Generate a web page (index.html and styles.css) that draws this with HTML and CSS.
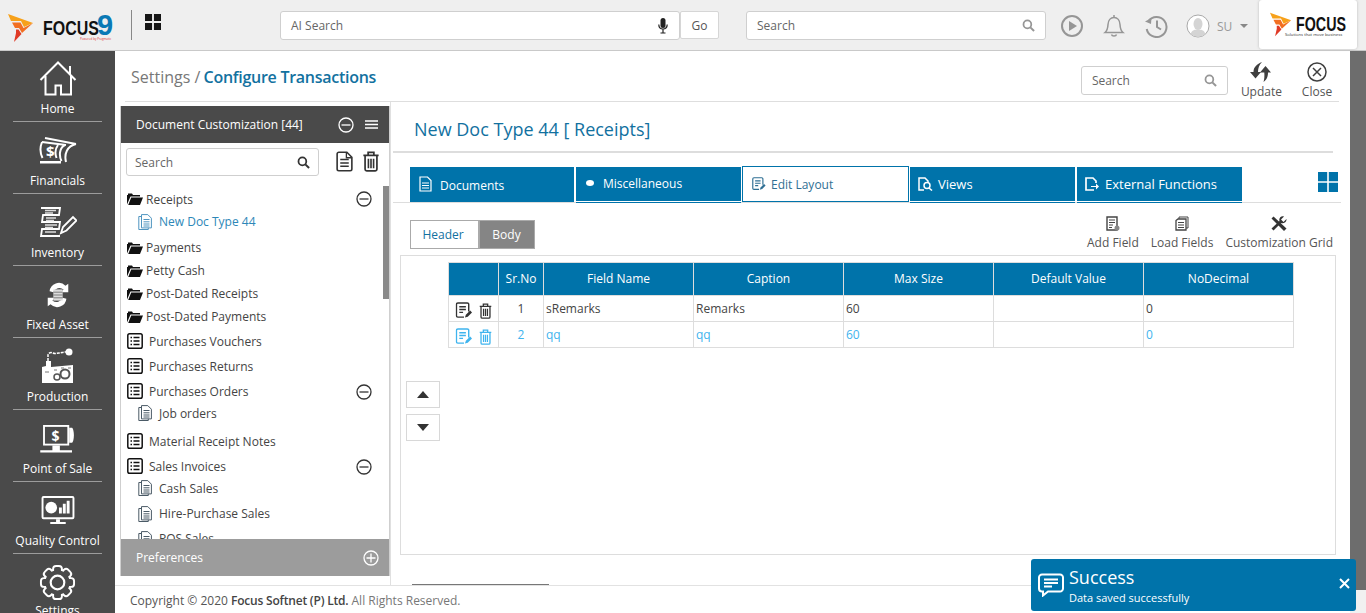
FILE: index.html
```html
<!DOCTYPE html>
<html lang="en">
<head>
<meta charset="utf-8">
<title>Configure Transactions</title>
<link rel="stylesheet" href="styles.css">
</head>
<body>
<svg width="0" height="0" class="defs">
  <symbol id="i-minus" viewBox="0 0 16 16"><circle cx="8" cy="8" r="7" fill="none" stroke="currentColor" stroke-width="1.3"/><path d="M3.5 8h9" stroke="currentColor" stroke-width="1.3"/></symbol>
  <symbol id="i-plus" viewBox="0 0 16 16"><circle cx="8" cy="8" r="7" fill="none" stroke="currentColor" stroke-width="1.3"/><path d="M3.5 8h9M8 3.5v9" stroke="currentColor" stroke-width="1.3"/></symbol>
  <symbol id="i-search" viewBox="0 0 14 14"><circle cx="5.8" cy="5.8" r="4.2" fill="none" stroke="currentColor" stroke-width="1.9"/><path d="M9 9l4 4" stroke="currentColor" stroke-width="2.2"/></symbol>
  <symbol id="i-folder" viewBox="0 0 16 12"><path d="M0 11.5V2h1V.5h4L6 2h7v1.5H3.5L0 11.5z" fill="currentColor"/><path d="M1.2 12l3-7.500H16L13 12z" fill="currentColor"/></symbol>
  <symbol id="i-list" viewBox="0 0 16 16"><rect x=".8" y=".8" width="14.4" height="14.4" rx="1.8" fill="none" stroke="currentColor" stroke-width="1.5"/><path d="M3.5 4.5H5M6.5 4.5h6M3.5 8H5M6.5 8h6M3.5 11.5H5M6.5 11.5h6" stroke="currentColor" stroke-width="1.5"/></symbol>
  <symbol id="i-doc" viewBox="0 0 14 16"><path d="M3.5.6h6.300l3.600 3.600v9.700H3.500z" fill="none" stroke="currentColor"/><path d="M3.5 2.500H.8v13h9.500v-1.700" fill="none" stroke="currentColor"/><path d="M5.500 5.500h6M5.500 7.800h6M5.500 10h6M5.500 12h6" stroke="currentColor"/></symbol>
  <symbol id="i-page" viewBox="0 0 18 22"><path d="M1.2 3A1.800 1.800 0 0 1 3 1.200h8.500l5.300 5.300V19a1.800 1.800 0 0 1-1.800 1.800H3A1.800 1.800 0 0 1 1.200 19z" fill="none" stroke="currentColor" stroke-width="1.700"/><path d="M11 1.500V7h5.500" fill="none" stroke="currentColor" stroke-width="1.400"/><path d="M4.500 9h9M4.500 12.500h9M4.500 16h9" stroke="currentColor" stroke-width="1.600"/></symbol>
  <symbol id="i-trash" viewBox="0 0 18 22"><path d="M1 4.500h16M6 4V1.500h6V4" fill="none" stroke="currentColor" stroke-width="1.800"/><path d="M2.800 5v14.200c0 1 .7 1.700 1.700 1.700h9c1 0 1.700-.7 1.700-1.700V5" fill="none" stroke="currentColor" stroke-width="1.800"/><path d="M6.300 8v10M9 8v10M11.700 8v10" stroke="currentColor" stroke-width="1.700"/></symbol>
  <symbol id="i-edit" viewBox="0 0 18 18"><path d="M14 10V2.500A1.500 1.500 0 0 0 12.500 1h-10A1.500 1.500 0 0 0 1 2.500v12A1.500 1.500 0 0 0 2.500 16H9" fill="none" stroke="currentColor" stroke-width="1.500"/><path d="M4 5h7M4 8h7M4 11h4" stroke="currentColor" stroke-width="1.500"/><path d="M10 16.500l1-3 4.500-4.500 2 2-4.500 4.500z" fill="currentColor"/></symbol>
  <symbol id="i-flame" viewBox="0 0 26 28"><path d="M0 0l25 9-9 4-3-6H3z" fill="#f7a11a"/><path d="M4 8.500h8.500l3 5.500L25 9 14 19l-3-5H7z" fill="#f26f21"/><path d="M8 15.500h2.500l3 4.500L6 28l2-9z" fill="#e03a26"/></symbol>
</svg>

<header class="topbar">
  <div class="brand">
    <svg class="flame" width="26" height="28"><use href="#i-flame"/></svg>
    <span class="brand-name">FOCUS</span><span class="brand-nine">9</span>
    <small class="brand-sub">Powered by Pragmatic</small>
    <i class="brand-sep"></i>
    <svg class="apps" width="16" height="16" viewBox="0 0 17 17"><path d="M0 0h7.500v7.500H0zM9.500 0H17v7.500H9.500zM0 9.500h7.500V17H0zM9.500 9.500H17V17H9.500z" fill="#161616"/></svg>
  </div>
  <div class="ai-search">
    <div class="field ai-field"><span>AI Search</span>
      <svg width="10" height="16" viewBox="0 0 10 16"><rect x="2.500" y="0" width="5" height="10" rx="2.500" fill="#222"/><path d="M.8 6.500c0 6 8.400 6 8.400 0M5 11v3.500M2.500 15h5" fill="none" stroke="#222" stroke-width="1.200"/></svg>
    </div>
    <button class="go">Go</button>
  </div>
  <div class="field top-search"><span>Search</span><svg class="sicon" width="13" height="13"><use href="#i-search"/></svg></div>
  <div class="top-icons">
    <svg width="24" height="24" viewBox="0 0 24 24"><circle cx="12" cy="12" r="10" fill="none" stroke="#969696" stroke-width="2"/><path d="M9 7l8 5-8 5z" fill="#969696"/></svg>
    <svg width="22" height="24" viewBox="0 0 22 24"><path d="M2 18.500c2.500-2 2.800-4 3-8 .2-4 2.500-7 6-7s5.800 3 6 7c.2 4 .5 6 3 8z" fill="none" stroke="#969696" stroke-width="1.500"/><path d="M8.500 20.500c.5 2 4.500 2 5 0M11 1v2" fill="none" stroke="#969696" stroke-width="1.500"/></svg>
    <svg width="24" height="24" viewBox="0 0 24 24"><path d="M4.500 7a10 10 0 1 1-1.800 8" fill="none" stroke="#969696" stroke-width="2"/><path d="M1 7.500l6 2.500.5-6z" fill="#969696"/><path d="M13 6.500V13l4 2.500" fill="none" stroke="#969696" stroke-width="2"/></svg>
    <span class="user">
      <svg width="24" height="24" viewBox="0 0 24 24"><circle cx="12" cy="12" r="11" fill="#fff" stroke="#a9a9a9"/><ellipse cx="12" cy="10" rx="4.500" ry="6" fill="#d4d4d4"/><path d="M4.500 20c1.500-4 4.500-4.500 7.500-4.500s6 .5 7.500 4.500a11 11 0 0 1-15 0z" fill="#d4d4d4"/></svg>
      <span>SU</span><i class="caret"></i>
    </span>
  </div>
  <div class="client-logo">
    <svg width="22" height="25"><use href="#i-flame"/></svg>
    <div class="client-text"><b>FOCUS</b><small>Solutions that move business</small></div>
  </div>
</header>

<div class="shell">
  <nav class="rail">
    <a class="rail-item"><svg width="38" height="36" viewBox="0 0 38 36"><path d="M1.500 19L19 1.500 36.500 19M31 13.500V5M6.500 15v18.500h10V24.500h5.500v9h10V15" fill="none" stroke="#fff" stroke-width="2"/></svg><span>Home</span></a>
    <a class="rail-item"><svg width="38" height="28" viewBox="0 0 38 28"><path d="M6 1l31 6M3 5l24 3" fill="none" stroke="#fff" stroke-width="2"/><path d="M3 5C1 10 1 16 3.500 21M19 8c-3 4-3 9-1.500 13M26 8c-6 3-6 11-3.500 16M37 7c-9 2-12 10-10 18" fill="none" stroke="#fff" stroke-width="2"/><path d="M1 24h21v2.500H1z" fill="#fff"/><text x="7" y="20" class="rail-dollar">$</text></svg><span>Financials</span></a>
    <a class="rail-item"><svg width="38" height="30" viewBox="0 0 38 30"><path d="M2 1h19l-1 7H4l-1 7h18l-1 7H3l-1 7h19" fill="none" stroke="#fff" stroke-width="1.800"/><path d="M6 3.500h11M6 6h8M7 11h10M7 13.500h8M6 18h12M6 20.500h8M6 25h11" stroke="#ddd" stroke-width="1.500"/><path d="M22 26l2-6 10-10 3.500 3.500-10 10z" fill="none" stroke="#fff" stroke-width="1.800"/></svg><span>Inventory</span></a>
    <a class="rail-item"><svg width="26" height="28" viewBox="0 0 26 30"><path d="M4 11a10 10 0 0 1 17-6l3-2v9h-8l3-3A7 7 0 0 0 8 12zM22 19a10 10 0 0 1-17 6l-3 2v-9h8l-3 3a7 7 0 0 0 11-3z" fill="#fff"/><rect x="8" y="9" width="10" height="12" fill="#ddd"/><path d="M8 12h10M8 15h10M8 18h10" stroke="#777"/></svg><span>Fixed Asset</span></a>
    <a class="rail-item rail-tall"><svg width="32" height="36" viewBox="0 0 32 36"><circle cx="27" cy="4" r="3.500" fill="#fff"/><path d="M6 13V7c0-2 3-3 5-2s4 0 6 0 4-1 7-1" fill="none" stroke="#fff" stroke-width="1.500" stroke-dasharray="3 1"/><path d="M4 13h5v6l22-2v18H0V19l4-1z" fill="#fff"/><circle cx="15" cy="29" r="3" fill="none" stroke="#555" stroke-width="1.500"/><circle cx="23" cy="26" r="4.500" fill="none" stroke="#555" stroke-width="2"/><path d="M3 24h4M12 22h3M19 20h3M26 20h3" stroke="#777"/></svg><span>Production</span></a>
    <a class="rail-item"><svg width="38" height="28" viewBox="0 0 38 30"><rect x="4" y="1" width="26" height="20" fill="none" stroke="#fff" stroke-width="2"/><path d="M31 3h3c1 0 2 4 2 8s-1 8-2 8h-3z" fill="#fff"/><path d="M0 27h34v2.500H0zM13 22h8v5h-8z" fill="#fff"/><text x="12" y="17" class="rail-dollar">$</text></svg><span>Point of Sale</span></a>
    <a class="rail-item"><svg width="34" height="29" viewBox="0 0 34 30"><rect x="1" y="1" width="32" height="22" rx="1" fill="none" stroke="#fff" stroke-width="2"/><circle cx="10" cy="12" r="6" fill="#fff"/><path d="M18 18h3v-6h-3zM22 18h3V8h-3zM26 18h3V5h-3z" fill="#fff"/><path d="M15 24h4v3h-4zM9 27h16v2H9z" fill="#fff"/></svg><span>Quality Control</span></a>
    <a class="rail-item"><svg width="37" height="37" viewBox="0 0 38 38">
      <g fill="#fff" stroke="#fff" stroke-width="4" stroke-linejoin="round">
        <circle cx="19" cy="19" r="12.500"/><rect x="15.500" y="3" width="7" height="32" rx="2"/><rect x="15.500" y="3" width="7" height="32" rx="2" transform="rotate(45 19 19)"/><rect x="15.500" y="3" width="7" height="32" rx="2" transform="rotate(90 19 19)"/><rect x="15.500" y="3" width="7" height="32" rx="2" transform="rotate(135 19 19)"/>
      </g>
      <g fill="#4a4a4a">
        <circle cx="19" cy="19" r="12.500"/><rect x="15.500" y="3" width="7" height="32" rx="2"/><rect x="15.500" y="3" width="7" height="32" rx="2" transform="rotate(45 19 19)"/><rect x="15.500" y="3" width="7" height="32" rx="2" transform="rotate(90 19 19)"/><rect x="15.500" y="3" width="7" height="32" rx="2" transform="rotate(135 19 19)"/>
      </g>
      <circle cx="19" cy="19" r="7" fill="none" stroke="#fff" stroke-width="2.200"/></svg><span>Settings</span></a>
  </nav>

  <main class="page">
    <div class="page-head">
      <h1 class="crumb"><span class="crumb-root">Settings /</span> <b>Configure Transactions</b></h1>
      <div class="page-actions">
        <div class="field page-search"><span>Search</span><svg class="sicon" width="13" height="13"><use href="#i-search"/></svg></div>
        <a class="action"><svg width="22" height="20" viewBox="0 0 22 20"><path d="M0 10l5.500 6.500L11 10H8C8 6 9 3 12 0 7 2 3.500 5 3.500 10z" fill="#3f3f3f"/><path d="M10 10.500L15.500 4l5.500 6.500h-3c0 4-1 7-4.500 9.500 1-3 1-6 .8-9.500z" fill="#3f3f3f"/></svg><span>Update</span></a>
        <a class="action"><svg width="20" height="20" viewBox="0 0 20 20"><circle cx="10" cy="10" r="9" fill="none" stroke="#3f3f3f" stroke-width="1.500"/><path d="M6 6l8 8M14 6l-8 8" stroke="#3f3f3f" stroke-width="1.500"/></svg><span>Close</span></a>
      </div>
    </div>

    <div class="workspace">
      <aside class="panel">
        <div class="panel-head"><span>Document Customization [44]</span>
          <svg class="pi" width="16" height="16"><use href="#i-minus"/></svg>
          <svg width="13" height="9" viewBox="0 0 13 9"><path d="M0 1h13M0 4.500h13M0 8h13" stroke="#fff" stroke-width="1.400"/></svg>
        </div>
        <div class="panel-tools">
          <div class="field panel-search"><span>Search</span><svg class="sicon dark" width="13" height="13"><use href="#i-search"/></svg></div>
          <svg class="tool" width="17" height="21"><use href="#i-page"/></svg>
          <svg class="tool" width="18" height="21"><use href="#i-trash"/></svg>
        </div>
        <div class="tree-wrap">
          <ul class="tree">
            <li class="node f1"><svg class="ic" width="16" height="12"><use href="#i-folder"/></svg><span>Receipts</span><svg class="toggle" width="16" height="16"><use href="#i-minus"/></svg></li>
            <li class="leaf sel"><svg class="ic" width="14" height="16"><use href="#i-doc"/></svg><span>New Doc Type 44</span></li>
            <li class="node f2"><svg class="ic" width="16" height="12"><use href="#i-folder"/></svg><span>Payments</span></li>
            <li class="node f3"><svg class="ic" width="16" height="12"><use href="#i-folder"/></svg><span>Petty Cash</span></li>
            <li class="node f3"><svg class="ic" width="16" height="12"><use href="#i-folder"/></svg><span>Post-Dated Receipts</span></li>
            <li class="node f3"><svg class="ic" width="16" height="12"><use href="#i-folder"/></svg><span>Post-Dated Payments</span></li>
            <li class="node l1"><svg class="ic" width="16" height="16"><use href="#i-list"/></svg><span>Purchases Vouchers</span></li>
            <li class="node l2"><svg class="ic" width="16" height="16"><use href="#i-list"/></svg><span>Purchases Returns</span></li>
            <li class="node l2"><svg class="ic" width="16" height="16"><use href="#i-list"/></svg><span>Purchases Orders</span><svg class="toggle" width="16" height="16"><use href="#i-minus"/></svg></li>
            <li class="leaf tight"><svg class="ic" width="14" height="16"><use href="#i-doc"/></svg><span>Job orders</span></li>
            <li class="node l3"><svg class="ic" width="16" height="16"><use href="#i-list"/></svg><span>Material Receipt Notes</span></li>
            <li class="node l2"><svg class="ic" width="16" height="16"><use href="#i-list"/></svg><span>Sales Invoices</span><svg class="toggle" width="16" height="16"><use href="#i-minus"/></svg></li>
            <li class="leaf tight"><svg class="ic" width="14" height="16"><use href="#i-doc"/></svg><span>Cash Sales</span></li>
            <li class="leaf l2 hire"><svg class="ic" width="14" height="16"><use href="#i-doc"/></svg><span>Hire-Purchase Sales</span></li>
            <li class="leaf l2"><svg class="ic" width="14" height="16"><use href="#i-doc"/></svg><span>POS Sales</span></li>
          </ul>
          <i class="tree-thumb"></i>
        </div>
        <div class="panel-foot"><span>Preferences</span><svg width="16" height="16"><use href="#i-plus"/></svg></div>
      </aside>

      <section class="content">
        <h2 class="doc-title">New Doc Type 44 [ Receipts]</h2>
        <div class="tabs">
          <a class="tab t-doc"><svg width="13" height="16" viewBox="0 0 13 16"><path d="M1 1h7.500L12 4.500V15H1z" fill="none" stroke="#fff" stroke-width="1.200"/><path d="M3 7h7M3 9.500h7M3 12h7" stroke="#fff"/></svg><span>Documents</span></a>
          <a class="tab t-misc"><i class="dot"></i><span>Miscellaneous</span></a>
          <a class="tab active"><svg width="16" height="14" viewBox="0 0 18 16"><use href="#i-edit"/></svg><span>Edit Layout</span></a>
          <a class="tab t-big t-views"><svg width="15" height="14" viewBox="0 0 15 14"><path d="M6 13H1V1h6l3 3v1" fill="none" stroke="#fff" stroke-width="1.500"/><circle cx="9" cy="8.500" r="3" fill="none" stroke="#fff" stroke-width="1.500"/><path d="M11 11l3 2.500" stroke="#fff" stroke-width="1.500"/></svg><span>Views</span></a>
          <a class="tab t-big"><svg width="14" height="14" viewBox="0 0 14 14"><path d="M9 13H1V1h7l3 3v2" fill="none" stroke="#fff" stroke-width="1.700"/><path d="M6 9h5V6.500l3 3-3 3V10H6z" fill="#fff"/></svg><span>External Functions</span></a>
          <svg class="layout-grid" width="20" height="20" viewBox="0 0 20 20"><path d="M0 0h9.200v9.200H0zM10.800 0H20v9.200h-9.200zM0 10.800h9.200V20H0zM10.800 10.800H20V20h-9.200z" fill="#0073aa"/></svg>
        </div>
        <div class="subbar">
          <div class="seg"><button class="seg-btn">Header</button><button class="seg-btn on">Body</button></div>
          <div class="sub-actions">
            <a class="sub-act"><svg width="14" height="15" viewBox="0 0 14 15"><path d="M1 1h10v13H1z" fill="none" stroke="#444" stroke-width="1.400"/><path d="M3 4h6M3 6.500h6M3 9h4M3 11.500h3" stroke="#444"/><circle cx="11" cy="12" r="2.500" fill="#888"/></svg><span>Add Field</span></a>
            <a class="sub-act"><svg width="14" height="15" viewBox="0 0 14 15"><path d="M4 3V1h9v11h-2" fill="none" stroke="#444"/><path d="M1 4.500L3 3h8v11H1z" fill="none" stroke="#444" stroke-width="1.300"/><path d="M3 6.500h6M3 9h6M3 11.500h6" stroke="#444"/></svg><span>Load Fields</span></a>
            <a class="sub-act"><svg width="16" height="15" viewBox="0 0 16 15"><path d="M.5 2.500L2.500.5l13 12-2.500 2.500z" fill="#333"/><path d="M15.500 3l-3 3-2.500-2.500L13 .5C10 -.5 7.500 2.500 8.500 5L.5 12.500 2.500 14.500 10 7c2.500 1 6-1 5.500-4z" fill="#333"/></svg><span>Customization Grid</span></a>
          </div>
        </div>
        <div class="grid-box">
          <div class="movers">
            <button class="mover"><i class="up"></i></button>
            <button class="mover"><i class="down"></i></button>
          </div>
          <table class="grid">
            <colgroup><col class="c0"><col class="c1"><col class="c2"><col class="c2"><col class="c2"><col class="c2"><col class="c2"></colgroup>
            <thead><tr><th></th><th>Sr.No</th><th>Field Name</th><th>Caption</th><th>Max Size</th><th>Default Value</th><th>NoDecimal</th></tr></thead>
            <tbody>
              <tr><td class="ops"><svg width="18" height="17" viewBox="0 0 18 18"><use href="#i-edit"/></svg><svg width="13" height="16" viewBox="0 0 18 22"><use href="#i-trash"/></svg></td><td class="ctr">1</td><td>sRemarks</td><td>Remarks</td><td>60</td><td></td><td>0</td></tr>
              <tr class="hl"><td class="ops"><svg width="18" height="17" viewBox="0 0 18 18"><use href="#i-edit"/></svg><svg width="13" height="16" viewBox="0 0 18 22"><use href="#i-trash"/></svg></td><td class="ctr">2</td><td>qq</td><td>qq</td><td>60</td><td></td><td>0</td></tr>
            </tbody>
          </table>
        </div>
        <i class="cut-line"></i>
      </section>
    </div>
    <footer class="foot">Copyright © 2020 <b>Focus Softnet (P) Ltd.</b> <span class="foot-dim">All Rights Reserved.</span></footer>
  </main>
  <div class="scroll"><i></i></div>
</div>

<div class="toast">
  <svg width="26" height="24" viewBox="0 0 26 24"><path d="M4 1.500h18A3 3 0 0 1 25 4.500v11a3 3 0 0 1-3 3H10l-5 4v-4H4a3 3 0 0 1-3-3v-11a3 3 0 0 1 3-3z" fill="none" stroke="#fff" stroke-width="2"/><path d="M6 6.500h14M6 10h14M6 13.500h8" stroke="#fff" stroke-width="2"/></svg>
  <div class="toast-text"><strong>Success</strong><span>Data saved successfully</span></div>
  <svg class="toast-x" width="11" height="11" viewBox="0 0 11 11"><path d="M1 1l9 9M10 1l-9 9" stroke="#fff" stroke-width="2"/></svg>
</div>
</body>
</html>
```
FILE: styles.css
```css
* { box-sizing: border-box; }
html, body { height: 100%; }
body { margin: 0; height: 613px; overflow: hidden; font-family: "Open Sans", sans-serif; font-size: 12px; color: #444; background: #fff; display: flex; flex-direction: column; }
.defs { position: absolute; }
a { color: inherit; text-decoration: none; }
ul { list-style: none; margin: 0; padding: 0; }
h1, h2 { margin: 0; font-weight: 400; }

.topbar { height: 51px; flex: none; background: #efefef; border-bottom: 1px solid #c9c9c9; display: flex; align-items: flex-start; }
.brand { width: 280px; height: 50px; position: relative; display: flex; align-items: center; padding-left: 8px; flex: none; }
.flame { margin-top: 5px; }
.brand-name { width: 50px; white-space: nowrap; font: 700 21px/1 "Liberation Sans", sans-serif; color: #111; margin-left: 9px; transform: scaleX(.76); transform-origin: left; margin-top: 4px; }
.brand-nine { font: 700 29px/24px "Liberation Sans", sans-serif; color: #0a79b5; margin-left: 4px; margin-top: -1px; }
.brand-sub { position: absolute; left: 80px; top: 37px; font-size: 3px; color: #d33; white-space: nowrap; }
.brand-sep { width: 1px; height: 30px; background: #888; margin: 0 13px 0 18px; }
.apps { margin-top: -6px; }

.field { height: 29px; background: #fff; border: 1px solid #cfcfcf; border-radius: 3px; display: flex; align-items: center; justify-content: space-between; font-size: 12px; color: #666; padding: 0 10px; }
.sicon { color: #969696; }
.sicon.dark { color: #333; }
.ai-search { display: flex; margin-top: 11px; flex: none; width: 440px; }
.ai-field { width: 400px; }
.ai-field svg { margin-right: 1px; }
.go { width: 39px; height: 28px; background: #fff; border: 1px solid #d6d6d6; border-radius: 2px; font: 12px "Open Sans", sans-serif; color: #555; padding: 0; }
.top-search { width: 300px; margin: 11px 0 0 26px; flex: none; }
.top-icons { display: flex; align-items: center; gap: 19px; margin: 14px 0 0 14px; flex: none; color: #999; }
.user { display: flex; align-items: center; gap: 7px; margin-left: -1px; }
.user span { margin-right: 1px; }
.caret { border: 4px solid transparent; border-top: 4px solid #888; border-bottom: 0; }
.client-logo { width: 98px; height: 49px; margin: 0 9px 0 auto; background: #fff; border-radius: 3px; box-shadow: 0 0 3px #bbb; display: flex; align-items: center; gap: 4px; padding-left: 11px; flex: none; }
.client-text { display: flex; flex-direction: column; margin-top: 3px; width: 46px; }
.client-text b { font: 700 21px/17px "Liberation Sans", sans-serif; color: #111; transform: scaleX(.68); transform-origin: left; white-space: nowrap; }
.client-text small { font-size: 4.200px; line-height: 6px; color: #333; white-space: nowrap; margin-left: -11px; }

.shell { flex: 1; min-height: 0; display: flex; }
.rail { width: 115px; flex: none; background: #4a4a4a; color: #fff; padding-top: 9px; display: flex; flex-direction: column; overflow: hidden; }
.rail-item { height: 72px; flex: none; margin: 0 13px; display: flex; flex-direction: column; align-items: center; justify-content: flex-end; border-bottom: 1px solid #9c9c9c; padding-bottom: 4px; gap: 8px; font-size: 12px; line-height: 16px; white-space: nowrap; }
.rail-item:first-child { height: 62px; gap: 4px; }
.rail-item.rail-tall { gap: 5px; }
.rail-item:last-child { border: 0; justify-content: flex-start; padding-top: 10px; height: 80px; gap: 2px; }
.rail-dollar { font: 700 15px "Open Sans", sans-serif; fill: #fff; }

.page { flex: 1; min-width: 0; display: flex; flex-direction: column; position: relative; }
.page-head { height: 51px; flex: none; margin: 0 11px 0 10px; padding: 0 6px; display: flex; align-items: center; justify-content: space-between; border-bottom: 1px solid #dedede; }
.crumb { font-size: 16px; color: #777; padding-top: 2px; }
.crumb b { font-weight: 600; color: #12719f; letter-spacing: -.27px; margin-left: -1px; }
.page-actions { display: flex; align-items: center; gap: 14px; margin-top: 8px; }
.page-search { width: 147px; margin-right: -1px; }
.action { display: flex; flex-direction: column; align-items: center; gap: 1px; line-height: 17px; color: #555; min-width: 41px; margin-top: 2px; }
.action + .action { margin-left: 5px; min-width: 32px; }

.workspace { flex: 1; min-height: 0; display: flex; }
.panel { width: 270px; margin: 4px 0 0 5px; height: 470px; flex: none; display: flex; flex-direction: column; border-left: 1px solid #cfcfcf; border-right: 1px solid #cfcfcf; position: relative; }
.panel-head { height: 37px; flex: none; background: #4a4a4a; color: #fff; display: flex; align-items: center; padding: 0 11px 0 15px; font-size: 12px; }
.panel-head span { flex: 1; }
.pi { margin-right: 11px; }
.panel-tools { height: 43px; flex: none; display: flex; align-items: flex-start; padding: 5px 0 0 5px; }
.panel-search { width: 193px; height: 28px; padding: 0 8px; }
.tool { color: #333; margin-top: 3px; margin-left: 17px; }
.tool + .tool { margin-left: 9px; }
.tree-wrap { flex: 1; min-height: 0; overflow: hidden; position: relative; }
.tree { padding: 2px 0 0 6px; }
.node, .leaf { display: flex; align-items: center; height: 23px; font-size: 12px; color: #444; position: relative; }
.node.f1 { height: 22px; }
.leaf { height: 22px; padding-left: 11px; gap: 7px; }
.leaf.sel { color: #2d87b8; height: 23px; }
.leaf.sel .ic { color: #4f95c0; }
.leaf .ic { color: #4a5a66; }
.leaf.l2 { height: 25px; }
.leaf.tight { margin-top: -2px; }
.leaf.hire { margin-top: 2px; }
.node .ic { margin-right: 3px; color: #111; }
.l1, .l2, .l3 { height: 25px; }
.node.l1 .ic, .node.l2 .ic, .node.l3 .ic { margin-right: 6px; margin-top: -2px; }
.node.f2 { margin-top: 3px; }
.node.l1 { margin-top: 1px; }
.node.l3 { margin-top: 5px; }
.toggle { position: absolute; left: 229px; color: #333; }
.tree-thumb { position: absolute; right: 0; top: 0; width: 6px; height: 113px; background: #8a8a8a; }
.panel-foot { position: absolute; left: 0; right: 0; bottom: 0; height: 37px; background: #9c9c9c; color: #fff; display: flex; align-items: center; justify-content: space-between; padding: 0 10px 0 15px; font-size: 12px; }

.content { flex: 1; min-width: 0; position: relative; padding-left: 2px; border-left: 1px solid #e0e0e0; }
.doc-title { height: 49px; margin: 2px 17px 0 0; padding: 11px 0 0 21px; font-size: 18px; line-height: 28px; color: #12719f; border-bottom: 2px solid #ddd; }
.tabs { height: 36px; margin: 14px 9px 0 0; display: flex; align-items: flex-start; padding-left: 17px; position: relative; border-bottom: 1px solid #ddd; }
.tab { width: 165px; height: 35px; margin-right: 1px; background: #0073aa; color: #fff; font-size: 12px; display: flex; align-items: center; gap: 6px; padding: 0 8px; border-bottom: 1px solid #fff; box-shadow: 0 1px 0 #0073aa; flex: none; }
.t-doc { width: 164px; margin-right: 2px; gap: 8px; box-shadow: none; border-bottom-color: #0073aa; padding-left: 9px; }
.t-doc span { margin-top: 2px; }
.t-misc .dot { width: 8px; height: 6px; background: #fff; border-radius: 50%; margin: -2px 3px 0 2px; }
.t-misc span { margin-top: -1px; }
.tab.active { width: 167px; background: #fff; color: #2f6f94; border: 1px solid #0073aa; margin-top: -1px; height: 36px; box-shadow: none; gap: 4px; padding-left: 8px; }
.t-big { font-size: 13px; }
.t-views { margin-right: 2px; gap: 5px; }
.layout-grid { position: absolute; right: 3px; top: 5px; }
.subbar { height: 52px; display: flex; align-items: flex-start; justify-content: space-between; padding: 16px 17px 0 17px; }
.seg { display: flex; margin-top: 1px; }
.seg-btn { width: 69px; height: 29px; background: #fff; border: 1px solid #aaa; font: 12px "Open Sans", sans-serif; color: #12719f; padding: 0 3px 0 0; }
.seg-btn.on { width: 56px; background: #858585; color: #fff; padding: 0 1px 0 0; }
.sub-actions { display: flex; gap: 12px; margin-top: -3px; }
.sub-act { display: flex; flex-direction: column; align-items: center; gap: 4px; line-height: 16px; color: #555; }
.grid-box { height: 300px; margin: 0 14px 0 7px; border: 1px solid #ddd; padding: 6px 0 0 47px; position: relative; }
.movers { position: absolute; left: 5px; top: 125px; display: flex; flex-direction: column; gap: 6px; }
.mover { width: 34px; height: 27px; background: #fff; border: 1px solid #d8d8d8; padding: 0; display: flex; align-items: center; justify-content: center; }
.up { border: 6.500px solid transparent; border-bottom: 7px solid #333; border-top: 0; }
.down { border: 6.500px solid transparent; border-top: 7px solid #333; border-bottom: 0; }
.grid { border-collapse: collapse; table-layout: fixed; width: 846px; font-size: 12px; }
.c0 { width: 50px; }
.c1 { width: 45px; }
.c2 { width: 150px; }
.grid th { height: 33px; background: #0073aa; color: #fff; font-weight: 400; border: 1px solid #ddd; padding: 0 0 2px; }
.grid td { height: 26px; border: 1px solid #ddd; padding: 0 2px; color: #444; }
.grid td.ctr { text-align: center; }
.grid td.ops { padding: 3px 0 0 6px; color: #333; }
.ops svg { display: inline-block; vertical-align: middle; }
.ops svg + svg { margin-left: 6px; }
.hl td, .hl td.ops { color: #3fb4ee; }
.cut-line { position: absolute; left: 21px; top: 482px; width: 137px; height: 1px; background: #777; }
.foot { position: absolute; left: 0; right: 0; bottom: 0; height: 28px; background: #fff; border-top: 1px solid #e2e2e2; padding-left: 15px; line-height: 29px; font-size: 12px; color: #555; }
.foot b { font-weight: 600; color: #444; letter-spacing: -.2px; }
.foot-dim { color: #777; }
.scroll { width: 16px; flex: none; background: #6d6d6d; position: relative; }
.scroll i { position: absolute; left: 0; right: 0; bottom: 0; height: 23px; background: #f1f1f1; }

.toast { position: absolute; left: 1031px; top: 559px; width: 325px; height: 52px; background: #0073aa; border-radius: 3px; color: #fff; display: flex; align-items: center; padding-left: 7px; gap: 5px; }
.toast-text { display: flex; flex-direction: column; margin-top: 1px; }
.toast-text strong { font-weight: 400; font-size: 18px; line-height: 24px; }
.toast-text span { font-size: 11px; line-height: 17px; }
.toast-x { position: absolute; right: 6px; top: 19px; }
```
